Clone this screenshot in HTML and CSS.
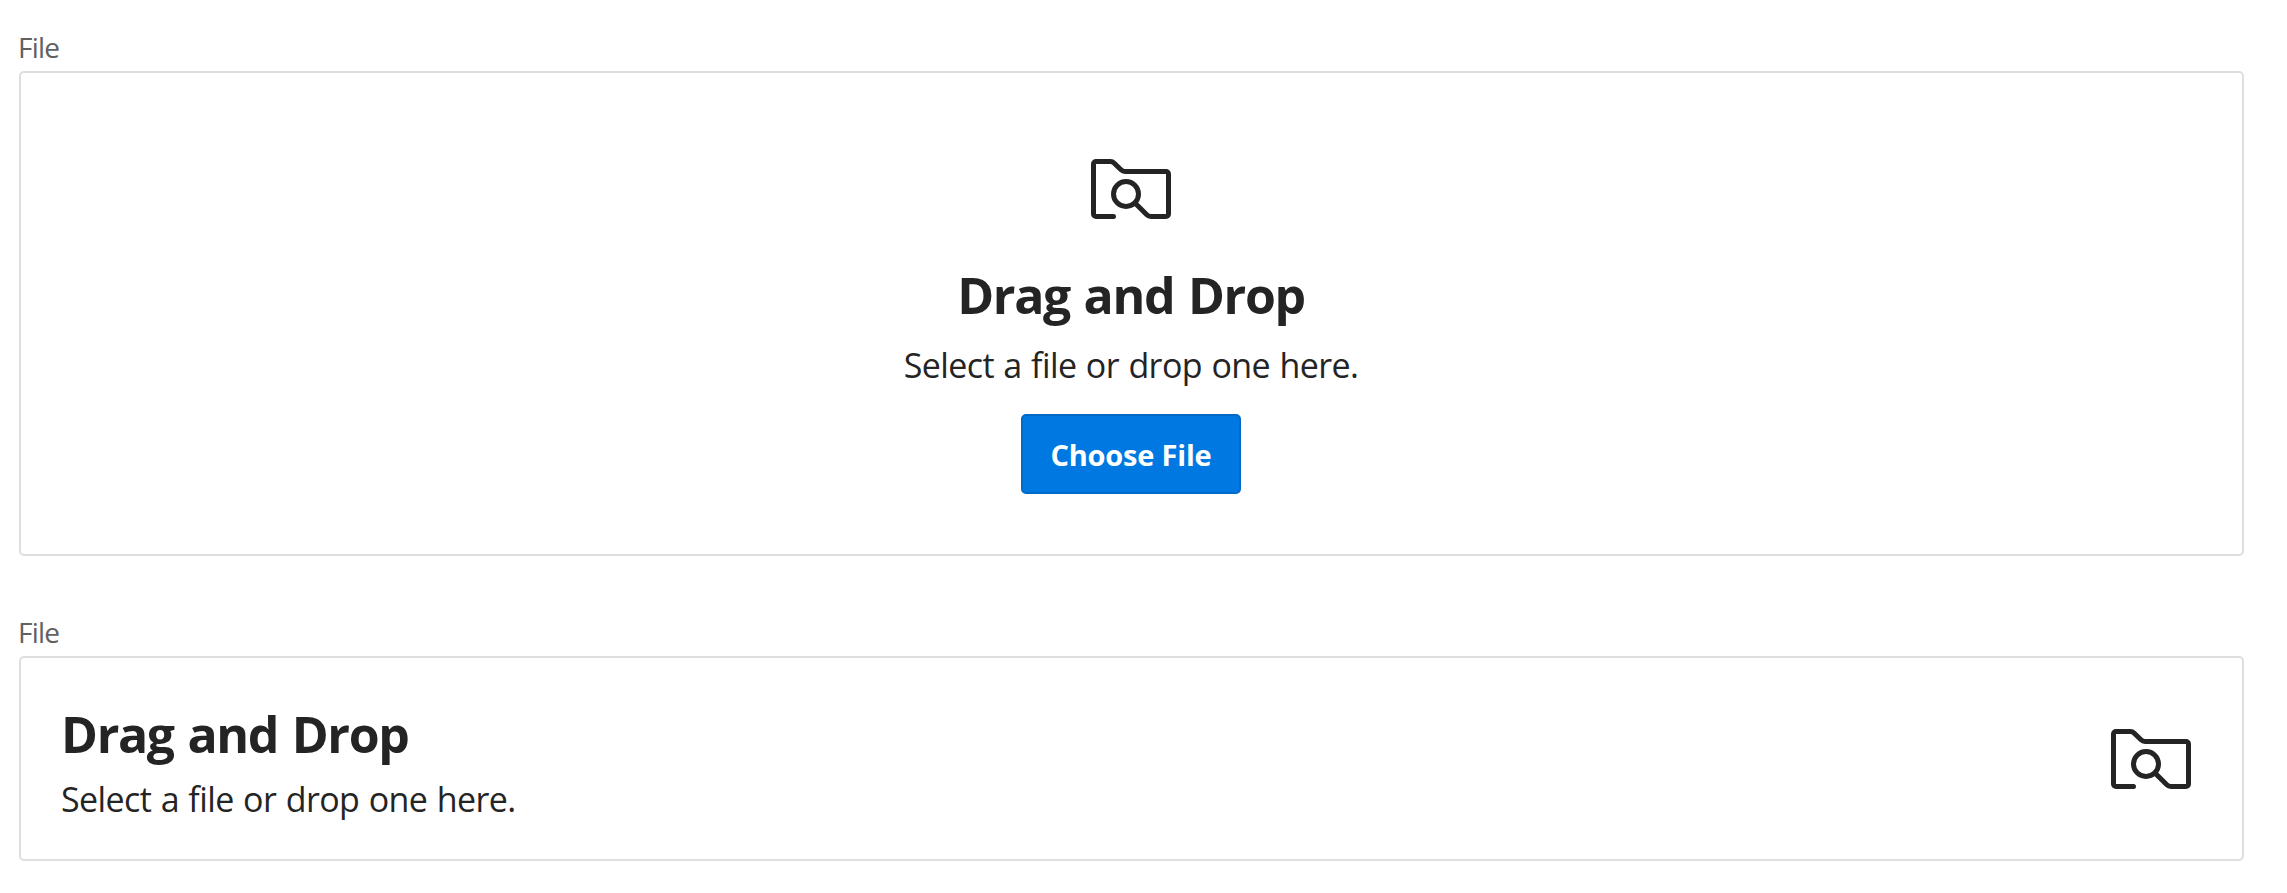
FILE: index.html
```html
<!DOCTYPE html>
<html lang="en">
<head>
<meta charset="utf-8">
<title>File</title>
<link rel="stylesheet" href="styles.css">
</head>
<body>
<main class="page">
  <section class="field">
    <div class="label"><span>File</span></div>
    <div class="dropzone dropzone-stacked">
      <svg class="icon" viewBox="0 0 80 60" aria-hidden="true">
        <path d="M22.5 57.5H5A2.5 2.5 0 0 1 2.5 55V5A2.5 2.5 0 0 1 5 2.5H19.5C21 2.5 22 3 23 4L30 10.8C31.2 12 32.3 12.5 34 12.5H75A2.5 2.5 0 0 1 77.5 15V55A2.5 2.5 0 0 1 75 57.5H60C58 57.5 57 57 55.8 55.8L44 44"/>
        <circle cx="35" cy="35" r="12.5"/>
      </svg>
      <h2 class="title"><span>Drag and Drop</span></h2>
      <p class="hint"><span>Select a file or drop one here.</span></p>
      <button class="button" type="button"><span>Choose File</span></button>
    </div>
  </section>
  <section class="field">
    <div class="label"><span>File</span></div>
    <div class="dropzone dropzone-inline">
      <div class="copy">
        <h2 class="title"><span>Drag and Drop</span></h2>
        <p class="hint"><span>Select a file or drop one here.</span></p>
      </div>
      <svg class="icon" viewBox="0 0 80 60" aria-hidden="true">
        <path d="M22.5 57.5H5A2.5 2.5 0 0 1 2.5 55V5A2.5 2.5 0 0 1 5 2.5H19.5C21 2.5 22 3 23 4L30 10.8C31.2 12 32.3 12.5 34 12.5H75A2.5 2.5 0 0 1 77.5 15V55A2.5 2.5 0 0 1 75 57.5H60C58 57.5 57 57 55.8 55.8L44 44"/>
        <circle cx="35" cy="35" r="12.5"/>
      </svg>
    </div>
  </section>
</main>
</body>
</html>
```
FILE: styles.css
```css
* { box-sizing: border-box; }
body { margin: 0; background: #fff; color: #242424; font-family: "Segoe UI", "Open Sans", "Noto Sans", sans-serif; }
.page { display: flex; flex-direction: column; gap: 60px; padding: 31px 43px 0 19px; }
.label { height: 40px; font-size: 28px; line-height: 32px; color: #616161; letter-spacing: -0.8px; text-indent: -1px; }
.dropzone { display: flex; border: 2px solid #dedede; border-radius: 5px; }
.dropzone-stacked { height: 485px; padding: 86px 1px 0 0; flex-direction: column; align-items: center; }
.dropzone-inline { height: 205px; padding: 46px 51px 0 40px; justify-content: space-between; align-items: flex-start; }
.icon { width: 80px; height: 60px; fill: none; stroke: #242424; stroke-width: 5; stroke-linecap: round; flex: none; }
.dropzone-inline .icon { margin-top: 25px; }
.title { margin: 0; font-size: 50px; line-height: 60px; font-weight: 700; white-space: nowrap; letter-spacing: -1.35px; word-spacing: 2px; }
.dropzone-stacked .title { margin-top: 46px; }
.hint { margin: 11px 0 0; font-size: 34px; line-height: 48px; white-space: nowrap; letter-spacing: -0.6px; word-spacing: 1.2px; }
.dropzone-stacked .hint { margin-top: 16px; }
.button { width: 220px; height: 80px; margin-top: 25px; padding: 0; border: 2px solid #006ac6; border-radius: 5px; background: #0078e1; color: #fff; font: inherit; font-size: 29px; font-weight: 700; letter-spacing: -0.2px; white-space: nowrap; }
```
